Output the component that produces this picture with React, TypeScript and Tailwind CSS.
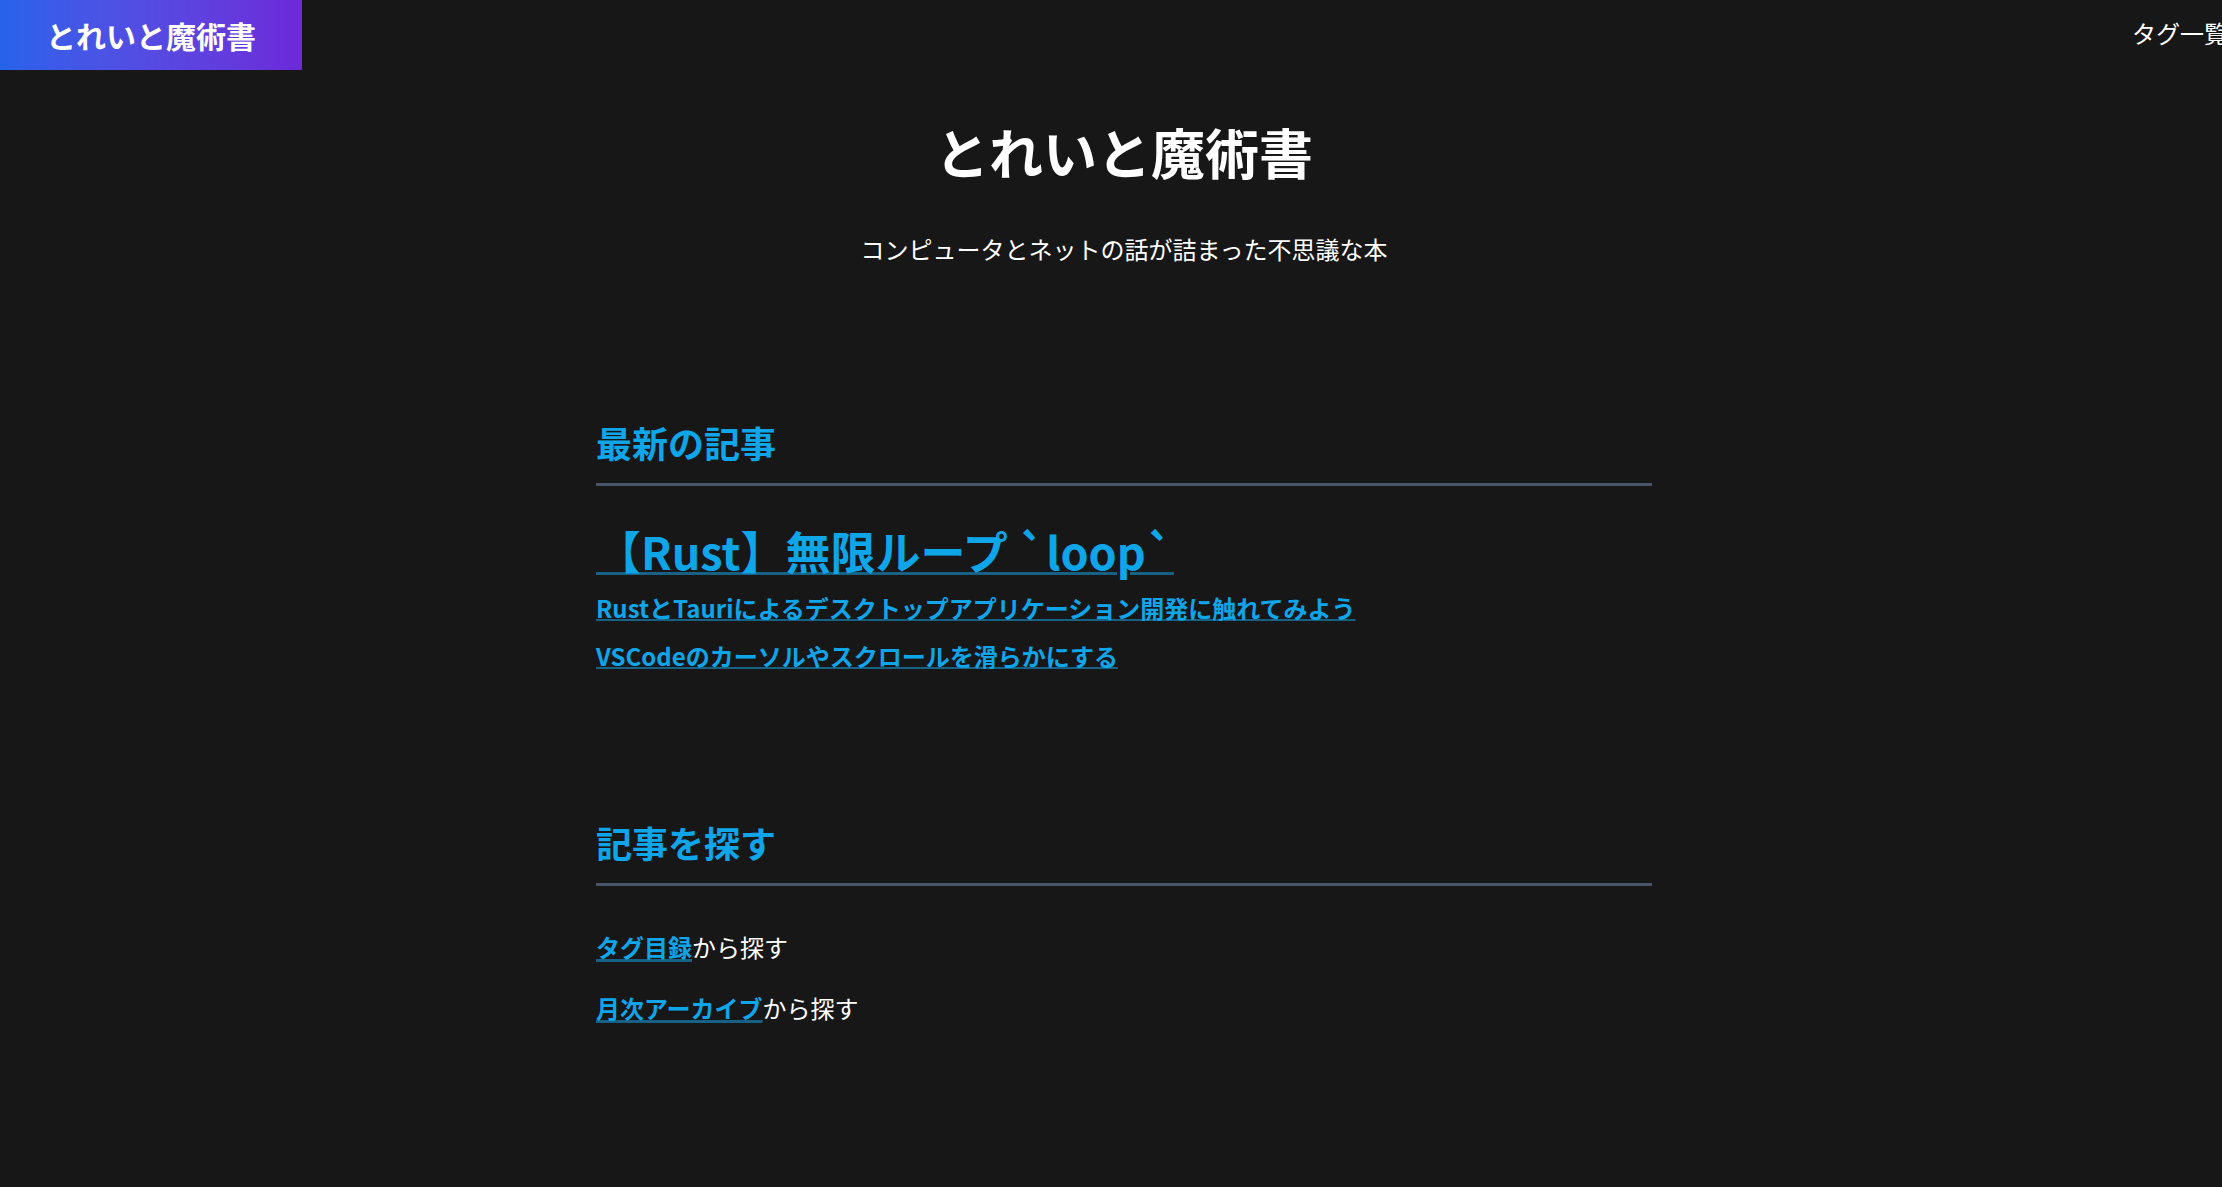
export default function App() {
  const latest = [
    "RustとTauriによるデスクトップアプリケーション開発に触れてみよう",
    "VSCodeのカーソルやスクロールを滑らかにする",
  ];

  return (
    <div
      className="min-h-screen w-[2248px] bg-[#171717] text-white"
      style={{ fontFamily: '"Noto Sans CJK JP", "Noto Sans", sans-serif' }}
    >
      {/* Header */}
      <header className="flex h-[70px] items-start justify-between">
        <a className="flex h-[70px] w-[302px] items-center justify-center bg-gradient-to-r from-[#2563eb] to-[#6d28d9] text-[30px] font-bold leading-none text-white">
          とれいと魔術書
        </a>
        <nav className="flex h-[66px] items-center pr-[20px] text-[24px] leading-none">
          <a>タグ一覧</a>
        </nav>
      </header>

      <main className="mx-auto w-[1056px]">
        {/* Hero */}
        <div className="pt-[41px] text-center">
          <h1 className="text-[54px] font-bold leading-[1.5]">とれいと魔術書</h1>
          <p className="mt-[39px] text-[24px] leading-[1.5]">
            コンピュータとネットの話が詰まった不思議な本
          </p>
        </div>

        {/* Latest */}
        <section className="mt-[148px]">
          <h2 className="border-b-[3px] border-[#475569] pb-[14px] text-[36px] font-bold leading-[1.5] text-[#0ea5e9]">
            最新の記事
          </h2>
          <div className="mt-[31px] flex flex-col items-start">
            <a className="text-[45px] font-bold leading-[67px] text-[#0ea5e9] underline decoration-[#176184] decoration-[3px]">
              【Rust】無限ループ `loop`
            </a>
            {latest.map((title) => (
              <a
                key={title}
                className="text-[24px] font-bold leading-[48px] text-[#0ea5e9] underline decoration-[#176184] decoration-2"
              >
                {title}
              </a>
            ))}
          </div>
        </section>

        {/* Search */}
        <section className="mt-[135px] pb-[160px]">
          <h2 className="border-b-[3px] border-[#475569] pb-[14px] text-[36px] font-bold leading-[1.5] text-[#0ea5e9]">
            記事を探す
          </h2>
          <p className="mt-[43px] text-[24px] leading-[1.5]">
            <a className="font-bold text-[#0ea5e9] underline decoration-[#176184] decoration-[3px]">
              タグ目録
            </a>
            から探す
          </p>
          <p className="mt-[25px] text-[24px] leading-[1.5]">
            <a className="font-bold text-[#0ea5e9] underline decoration-[#176184] decoration-[3px]">
              月次アーカイブ
            </a>
            から探す
          </p>
        </section>
      </main>
    </div>
  );
}
